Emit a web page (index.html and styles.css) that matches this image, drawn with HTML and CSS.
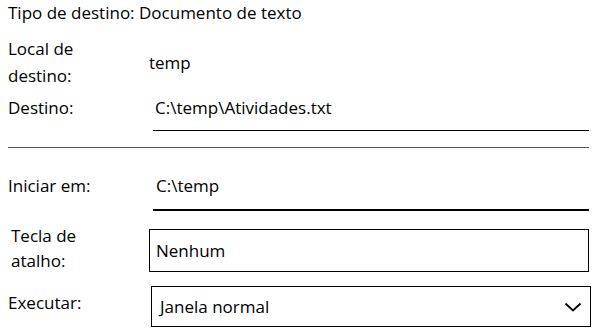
FILE: index.html
```html
<!DOCTYPE html>
<html lang="pt-BR">
<head>
    <meta charset="UTF-8">
    <title>Propriedades do atalho</title>
    <link rel="stylesheet" href="styles.css">
</head>
<body>
    <div class="panel">
        <div class="type-row">Tipo de destino: Documento de texto</div>

        <div class="row row-location">
            <div class="label">Local de<br>destino:</div>
            <div class="value">temp</div>
        </div>

        <div class="row row-target">
            <div class="label">Destino:</div>
            <div class="field">C:\temp\Atividades.txt</div>
        </div>

        <div class="separator"></div>

        <div class="row row-start">
            <div class="label">Iniciar em:</div>
            <div class="field strong">C:\temp</div>
        </div>

        <div class="row row-shortcut">
            <div class="label label-indent">Tecla de<br>atalho:</div>
            <div class="box">Nenhum</div>
        </div>

        <div class="row row-run">
            <div class="label">Executar:</div>
            <div class="box select">
                <span>Janela normal</span>
                <svg class="chevron" width="18" height="10" viewBox="0 0 18 10">
                    <path d="M1.5 1.5 L9 8.5 L16.5 1.5" fill="none" stroke="#000" stroke-width="1.8"/>
                </svg>
            </div>
        </div>
    </div>
</body>
</html>
```

FILE: styles.css
```css
body {
    margin: 0;
    background-color: #fff;
    color: #000;
    font-family: "Open Sans", "Noto Sans", sans-serif;
    font-size: 17px;
}

.panel {
    padding: 0 11px 0 8px;
}

.type-row {
    height: 26px;
    line-height: 26px;
}

.row {
    display: grid;
    grid-template-columns: 141px 1fr;
    align-items: start;
}

.label {
    line-height: 27px;
}

.label-indent {
    padding-left: 3px;
}

/* Local de destino */
.row-location {
    margin-top: 9px;
    height: 54px;
    align-items: center;
}

/* Destino / Iniciar em */
.row-target .label,
.row-target .field {
    padding-top: 6px;
    line-height: 26px;
}

.field {
    margin-left: 4px;
    padding-left: 2px;
    padding-bottom: 9px;
    line-height: 26px;
    border-bottom: 1px solid #000;
}

.field.strong {
    border-bottom: 2px solid #000;
    padding-bottom: 10px;
    padding-left: 3px;
}

.separator {
    height: 1px;
    background-color: #555;
    margin-top: 16px;
}

.row-start .label,
.row-start .field {
    padding-top: 25px;
    line-height: 26px;
}

/* Tecla de atalho */
.row-shortcut {
    margin-top: 18px;
}

.row-shortcut .label {
    line-height: 25px;
    margin-top: -6px;
    margin-bottom: -2px;
}

.box {
    height: 43px;
    border: 1px solid #000;
    box-sizing: border-box;
    display: flex;
    align-items: center;
    padding-left: 6px;
}

/* Executar */
.row-run {
    margin-top: 14px;
    align-items: center;
}

.row-run .label {
    padding-bottom: 8px;
}

.row-run .box {
    height: 41px;
    margin-left: 2px;
    margin-right: -2px;
    padding-left: 8px;
    padding-right: 8px;
    justify-content: space-between;
}

.chevron {
    display: block;
}
```
